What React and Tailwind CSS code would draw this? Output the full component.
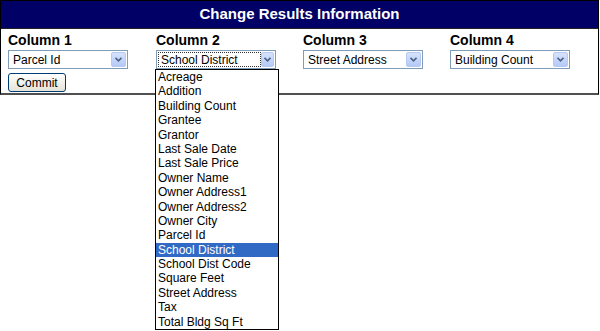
import React from "react";

const items = [
  "Acreage",
  "Addition",
  "Building Count",
  "Grantee",
  "Grantor",
  "Last Sale Date",
  "Last Sale Price",
  "Owner Name",
  "Owner Address1",
  "Owner Address2",
  "Owner City",
  "Parcel Id",
  "School District",
  "School Dist Code",
  "Square Feet",
  "Street Address",
  "Tax",
  "Total Bldg Sq Ft",
];

function Arrow() {
  return (
    <div className="w-[15px] h-[15px] mr-[1px] rounded-[2px] border border-[#b7c9f3] bg-gradient-to-b from-[#d6e3fd] to-[#b5c9f6] flex items-center justify-center">
      <svg width="7" height="5" viewBox="0 0 7 5">
        <path d="M0.5 0.8 L3.5 3.8 L6.5 0.8" fill="none" stroke="#4d6185" strokeWidth="1.6" />
      </svg>
    </div>
  );
}

function Select({ value, focused, children }) {
  return (
    <div className="relative w-[120px] h-[19px] border border-[#7f9db9] bg-white flex items-center">
      <div className="flex-1 h-full flex items-center pl-[1px]">
        {focused ? (
          <div className="h-[15px] w-[103px] border border-dotted border-[#333] flex items-center pl-[2px] text-[12px] leading-none">
            {value}
          </div>
        ) : (
          <div className="pl-[3px] text-[12px] leading-none">{value}</div>
        )}
      </div>
      <Arrow />
      {children}
    </div>
  );
}

export default function App() {
  const cols = [
    { label: "Column 1", value: "Parcel Id", w: "w-[148px]" },
    { label: "Column 2", value: "School District", open: true, w: "w-[147px]" },
    { label: "Column 3", value: "Street Address", w: "w-[147px]" },
    { label: "Column 4", value: "Building Count", w: "w-[130px]" },
  ];
  return (
    <div className="w-[600px] h-[331px] bg-white relative" style={{ fontFamily: '"Liberation Sans", Arial, sans-serif' }}>
      <div className="w-[599px] border border-black border-b-2 border-b-[#505050]">
        <div className="h-[28px] bg-[#000066] text-white text-[15px] font-bold flex items-center justify-center border-b border-[#222]">
          Change Results Information
        </div>
        <div className="px-[7px] pt-[2px] pb-[1px]">
          <div className="flex">
            {cols.map((c) => (
              <div key={c.label} className={c.w + " shrink-0"}>
                <div className="text-[14px] font-bold h-[19px] leading-[19px] text-black">{c.label}</div>
                <Select value={c.value} focused={c.open}>
                  {c.open && (
                    <div className="absolute left-[-2px] top-[18px] w-[124px] border border-black bg-white z-10">
                      {items.map((it) => (
                        <div
                          key={it}
                          className={
                            "h-[14.4px] leading-[14.4px] pl-[2px] text-[12px] whitespace-nowrap " +
                            (it === "School District" ? "bg-[#316ac5] text-white" : "text-black")
                          }
                        >
                          {it}
                        </div>
                      ))}
                    </div>
                  )}
                </Select>
              </div>
            ))}
          </div>
          <button className="mt-[4px] h-[19px] w-[58px] rounded-[3px] border border-[#003c74] bg-gradient-to-b from-[#ffffff] to-[#e6e3d6] text-[12px] text-black leading-none flex items-center justify-center">
            Commit
          </button>
        </div>
      </div>
    </div>
  );
}
